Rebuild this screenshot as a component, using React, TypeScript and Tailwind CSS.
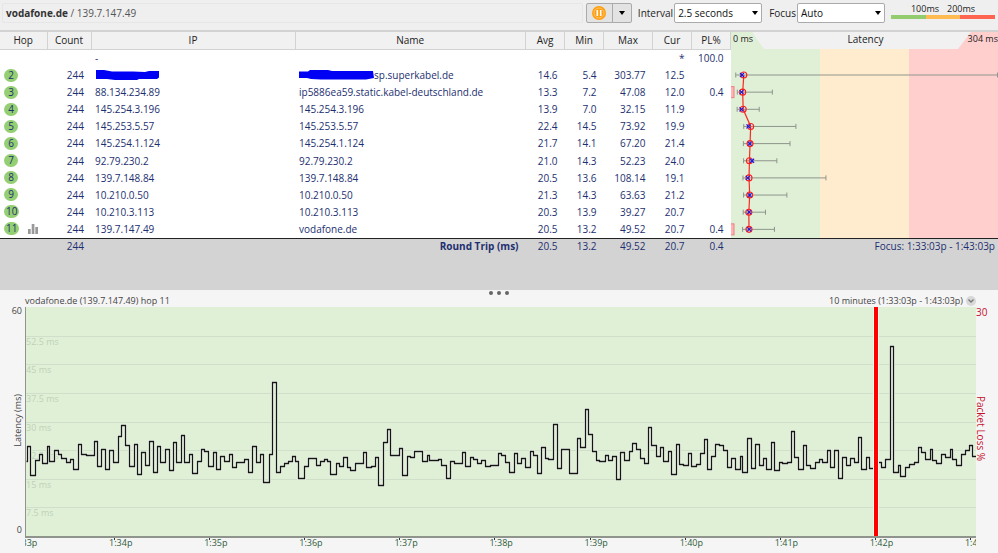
import React from "react";

type Hop = {
    hop?: number;
    ip: string;
    name: string;
    avg?: number;
    min?: number;
    max?: number;
    cur?: number;
    loss?: string;
};

const hops: Hop[] = [
    { hop: 2, ip: "", name: "sp.superkabel.de", avg: 14.6, min: 5.4, max: 303.77, cur: 12.5 },
    { hop: 3, ip: "88.134.234.89", name: "ip5886ea59.static.kabel-deutschland.de", avg: 13.3, min: 7.2, max: 47.08, cur: 12.0, loss: "0.4" },
    { hop: 4, ip: "145.254.3.196", name: "145.254.3.196", avg: 13.9, min: 7.0, max: 32.15, cur: 11.9 },
    { hop: 5, ip: "145.253.5.57", name: "145.253.5.57", avg: 22.4, min: 14.5, max: 73.92, cur: 19.9 },
    { hop: 6, ip: "145.254.1.124", name: "145.254.1.124", avg: 21.7, min: 14.1, max: 67.2, cur: 21.4 },
    { hop: 7, ip: "92.79.230.2", name: "92.79.230.2", avg: 21.0, min: 14.3, max: 52.23, cur: 24.0 },
    { hop: 8, ip: "139.7.148.84", name: "139.7.148.84", avg: 20.5, min: 13.6, max: 108.14, cur: 19.1 },
    { hop: 9, ip: "10.210.0.50", name: "10.210.0.50", avg: 21.3, min: 14.3, max: 63.63, cur: 21.2 },
    { hop: 10, ip: "10.210.3.113", name: "10.210.3.113", avg: 20.3, min: 13.9, max: 39.27, cur: 20.7 },
    { hop: 11, ip: "139.7.147.49", name: "vodafone.de", avg: 20.5, min: 13.2, max: 49.52, cur: 20.7, loss: "0.4" },
];

const columns = ["Hop", "Count", "IP", "Name", "Avg", "Min", "Max", "Cur", "PL%"];

const ticks = ["1:33p", "1:34p", "1:35p", "1:36p", "1:37p", "1:38p", "1:39p", "1:40p", "1:41p", "1:42p", "1:43p"];

const gridLabels = ["", "52.5 ms", "45 ms", "37.5 ms", "30 ms", "22.5 ms", "15 ms", "7.5 ms"];

// latency trace, x/y steps on a 950x229 plot
const trace =
    "M0 154H1V139H4V168H9V153H13V147H16V156H21V139H23V154H28V143H32V147H35V151H40V155H44V152H47V162H52V137H55V147H60V148H68V134H71V159H75V142H79V162H83V143H87V155H92V129H95V118H99V138H103V159H108V137H111V167H115V145H119V158H123V134H127V165H131V139H134V155H139V142H143V163H147V135H150V155H155V128H158V155H163V147H166V166H171V154H175V142H178V144H182V159H187V145H190V162H194V149H198V154H203V147H206V160H210V155H218V152H222V165H226V139H230V155H234V147H237V175H243V147H246V75H250V165H254V159H258V156H262V154H266V149H269V154H272V171H278V159H282V151H290" +
    "V158H294V154H298V152H301V154H304V167H310V156H313V159H317V150H321V160H324V163H329V156H337V145H340V160H345V159H349V150H352V178H357V135H361V122H364V148H373V141H376V168H381V149H384V150H388V144H396V154H401V148H403V153H412V152H415V158H420V171H424V154H428V156H436V145H439V159H444V150H447V152H451V156H455V153H459V159H464V158H472" +
    "V146H475V148H479V155H483V165H488V146H491V156H495V151H499V160H504V144H507V148H511V166H515V140H519V151H522V152H527V117H531V161H535V142H543V166H551V131H554V140H559V102H562V127H566V144H570V153H573V154H579V148H582V153H586V149H590V172H594V145H598V153H603V144H606V136H610V142H614V151H618V156H622V120H625V138H630V149H634V140H637V154H642V144H645V167H650V137H653V157H657V158H662V146H665V159H670V157H674" +
    "V146H678V132H681V162H685V149H689V137H693V138H697V143H701V160H705V151H709V162H714V149H716V165H721V131H725V161H729V137H733V158H737V151H740V162H745V135H748V163H753V155H756V156H761V155H765V124H768V150H772V162H777V138H780V158H784V161H789V155H793V152H796V155H801V143H804V160H808V143H812V171H816V150H820V158H824V151H828V155H832V130H835V162H840V150H843V161H851" +
    "V155H855V160H859V152H864V39H867V165H872V158H874V169H879V160H883V157H888V155H892V140H895V145H899V152H904V142H906V153H910V156H915V147H919V150H924V142H926V152H930V158H935V147H939V143H943V138H946V149H950";

const SCALE = 0.878;

function Caret() {
    return (
        <svg className="h-1 w-1.5 fill-black" viewBox="0 0 6 4" aria-hidden="true">
            <path d="M0 0H6L3 4Z" />
        </svg>
    );
}

function Dropdown({ id, label, value }: { id: string; label: string; value: string }) {
    return (
        <div className="flex items-center gap-px">
            <label htmlFor={id} className="text-[#222]">{label}</label>
            <div className="relative">
                <select id={id} className="block h-5 w-[88px] appearance-none rounded-xs border border-[#aaa] bg-white px-[3px] text-[#111]">
                    <option>{value}</option>
                </select>
                <span className="pointer-events-none absolute top-2 right-1">
                    <Caret />
                </span>
            </div>
        </div>
    );
}

function Toolbar() {
    return (
        <header className="flex h-[30px] items-start justify-between gap-[3px] bg-[#efefef] pt-[3px] pr-[3px] pl-0.5">
            <div className="flex h-5 flex-1 items-center rounded-xs border border-[#e6e6e6] px-[3px] text-[#555]">
                <b className="text-[#333]">vodafone.de</b>
                <span className="whitespace-pre"> / 139.7.147.49</span>
            </div>
            <div className="flex h-5 w-[46px] rounded-xs border border-[#aaa] bg-[#e3e3e3]">
                <button aria-label="Pause" className="grid w-[26px] place-items-center border-r border-[#aaa]">
                    <svg className="size-3.5" viewBox="0 0 14 14">
                        <circle cx="7" cy="7" r="7" fill="#ff9f0f" />
                        <circle cx="7" cy="7" r="5" fill="none" stroke="#ffc468" />
                        <path d="M5.3 4V10M8.7 4V10" stroke="#fff" strokeWidth="1.6" />
                    </svg>
                </button>
                <button aria-label="More" className="grid flex-1 place-items-center">
                    <Caret />
                </button>
            </div>
            <div className="flex gap-[7px] pl-[3px]">
                <Dropdown id="interval" label="Interval" value="2.5 seconds" />
                <Dropdown id="focus" label="Focus" value="Auto" />
            </div>
            <div className="ml-[3px] w-[104px] text-[9px] leading-[12px] text-[#222]">
                <div className="flex justify-center gap-2">
                    <span>100ms</span>
                    <span>200ms</span>
                </div>
                <div className="flex h-1">
                    <i className="flex-1 bg-[#93cc6f]" />
                    <i className="flex-1 bg-[#fdbb51]" />
                    <i className="flex-1 bg-[#fe6450]" />
                </div>
            </div>
        </header>
    );
}

function Scribble({ wide }: { wide?: boolean }) {
    return wide ? (
        <svg className="h-2.5 w-[75px] shrink-0" viewBox="0 0 75 10" aria-hidden="true">
            <path d="M0 1.5H9L11 0H29L33 1H74L75 8L67 9.5H22L12 9L8 8H0Z" fill="#0000f5" />
        </svg>
    ) : (
        <svg className="h-2.5 w-16" viewBox="0 0 64 10" aria-hidden="true">
            <path d="M1 0L9 0L17 1.5H38L50 2L54 1H64V7.5L62 9H44L42 10H20L12 9H1Z" fill="#0000f5" />
        </svg>
    );
}

function HopTable() {
    return (
        <table className="h-[221px] w-full table-fixed border-collapse text-right whitespace-nowrap text-[#1d2f70]">
            <colgroup>
                <col className="w-[47px]" />
                <col className="w-[44px]" />
                <col className="w-[204px]" />
                <col />
                <col className="w-[39px]" />
                <col className="w-[39px]" />
                <col className="w-[49px]" />
                <col className="w-[39px]" />
                <col className="w-[39px]" />
            </colgroup>
            <thead>
                <tr className="h-[17px] bg-[#f1f1f1] text-center text-[#222]">
                    {columns.map((c) => (
                        <th key={c} className="border-r border-b border-[#d2d2d2] p-0 font-normal">{c}</th>
                    ))}
                </tr>
            </thead>
            <tbody className="bg-white">
                <tr>
                    <td colSpan={2} />
                    <td className="p-0 pl-1 text-left">-</td>
                    <td colSpan={4} />
                    <td className="p-0 pr-[7px]">*</td>
                    <td className="p-0 pr-[7px]">100.0</td>
                </tr>
                {hops.map((h) => (
                    <tr key={h.hop}>
                        <td className="p-0 pl-1">
                            <div className="flex items-center gap-[9px]">
                                <span className="h-[13px] min-w-3.5 rounded-full bg-[#95cf73] px-0.5 text-center leading-[13px]">{h.hop}</span>
                                {h.hop === 11 && (
                                    <svg className="h-2.5 w-2.5 fill-[#999]" viewBox="0 0 10 10" aria-hidden="true">
                                        <path d="M0 5h2.7v5H0zM3.7 0h2.7v10H3.7zM7.3 3h2.7v7H7.3z" />
                                    </svg>
                                )}
                            </div>
                        </td>
                        <td className="p-0 pr-[7px]">244</td>
                        <td className="p-0 pl-1 text-left">{h.ip || <Scribble />}</td>
                        <td className="p-0 pl-1 text-left">
                            <div className="flex items-center">
                                {!h.ip && <Scribble wide />}
                                {h.name}
                            </div>
                        </td>
                        <td className="p-0 pr-[7px]">{h.avg!.toFixed(1)}</td>
                        <td className="p-0 pr-[7px]">{h.min!.toFixed(1)}</td>
                        <td className="p-0 pr-[7px]">{h.max!.toFixed(2)}</td>
                        <td className="p-0 pr-[7px]">{h.cur!.toFixed(1)}</td>
                        <td className="p-0 pr-[7px]">{h.loss}</td>
                    </tr>
                ))}
            </tbody>
            <tfoot>
                <tr className="h-[15px] border-t border-[#222]">
                    <td className="p-0" />
                    <td className="p-0 pr-[7px]">244</td>
                    <td className="p-0" />
                    <td className="p-0 pr-[7px] font-bold">Round Trip (ms)</td>
                    <td className="p-0 pr-[7px]">20.5</td>
                    <td className="p-0 pr-[7px]">13.2</td>
                    <td className="p-0 pr-[7px]">49.52</td>
                    <td className="p-0 pr-[7px]">20.7</td>
                    <td className="p-0 pr-[7px]">0.4</td>
                </tr>
            </tfoot>
        </table>
    );
}

function LatencyGraph() {
    const rowY = (i: number) => 26 + i * 17.15;
    const line = hops.map((h, i) => `${h.avg! * SCALE},${rowY(i)}`).join(" ");

    return (
        <div className="flex flex-col">
            <div className="relative h-[17px]">
                <svg className="absolute h-full w-full" viewBox="0 0 267 17" preserveAspectRatio="none" aria-hidden="true">
                    <path d="M0 0H89V17H0Z" fill="#dff0d7" />
                    <path d="M178 0H267V17H178Z" fill="#ffcfce" />
                    <path d="M21 0H240L227 17H33Z" fill="#f1f1f1" />
                </svg>
                <div className="relative grid grid-cols-[1fr_auto_1fr] items-center pl-0.5 text-[#222]">
                    <span className="text-[9px]">0 ms</span>
                    <span>Latency</span>
                    <span className="text-right text-[9px]">304 ms</span>
                </div>
            </div>
            <svg className="h-[189px] w-full" viewBox="0 0 267 189" preserveAspectRatio="none">
                <path d="M0 0H89V189H0Z" fill="#dff0d7" />
                <path d="M89 0H178V189H89Z" fill="#ffebcd" />
                <path d="M178 0H267V189H178Z" fill="#ffcfce" />
                {hops.map((h, i) => {
                    const y = rowY(i);
                    const a = h.min! * SCALE;
                    const b = Math.min(h.max! * SCALE, 266.5);
                    return (
                        <g key={h.hop}>
                            {h.loss && <rect x="-0.5" y={y - 5.5} width="3.5" height="11" fill="#ffb3b8" stroke="#ee8080" />}
                            <path d={`M${a} ${y}H${b}M${a} ${y - 2.5}v5M${b} ${y - 2.5}v5`} stroke="#8f958c" fill="none" />
                        </g>
                    );
                })}
                <polyline points={line} fill="none" stroke="#fb2a20" strokeWidth="1.2" />
                {hops.map((h, i) => {
                    const x = h.cur! * SCALE;
                    return (
                        <g key={h.hop} fill="none">
                            <circle cx={h.avg! * SCALE} cy={rowY(i)} r="3" stroke="#fb2020" strokeWidth="1.1" />
                            <path d={`M${x - 2} ${rowY(i) - 2}l4 4m0 -4l-4 4`} stroke="#1414e6" strokeWidth="1.1" />
                        </g>
                    );
                })}
            </svg>
            <div className="border-t border-[#222] pr-[3px] text-right text-[#1d2f70]">Focus: 1:33:03p - 1:43:03p</div>
        </div>
    );
}

function Timeline() {
    return (
        <section className="grid flex-1 grid-cols-[25px_1fr_22px] grid-rows-[12px_1fr_15px] bg-[#f5f5f5] text-[9px] leading-[12px] text-[#444]">
            <div className="col-start-2 flex justify-between">
                <span>vodafone.de (139.7.147.49) hop 11</span>
                <span className="flex items-center gap-[3px]">
                    10 minutes (1:33:03p - 1:43:03p)
                    <button aria-label="Change time range" className="grid size-2.5 place-items-center rounded-full bg-[#d8d8d8]">
                        <svg className="h-1 w-1.5" viewBox="0 0 6 4" fill="none" stroke="#777" strokeWidth="1.3">
                            <path d="M0.5 0.5L3 3L5.5 0.5" />
                        </svg>
                    </button>
                </span>
            </div>

            <div className="col-start-1 row-start-2 flex flex-col items-end justify-between pr-px pb-1">
                <span className="pr-0.5 leading-[8px]">60</span>
                <span className="rotate-180 [writing-mode:vertical-rl]">Latency (ms)</span>
                <span className="pr-0.5 leading-[8px]">0</span>
            </div>

            <div className="relative col-start-2 row-start-2 border-b-2 border-l border-[#8f948d] bg-[#dff0d7]">
                <div className="absolute inset-0 grid grid-rows-8 leading-[10px] text-[#bfd0b8]">
                    {gridLabels.map((l, i) => (
                        <div key={i} className={i ? "border-t border-[#cfdfc9]" : ""}>{l}</div>
                    ))}
                </div>
                <svg className="absolute h-full w-full" viewBox="0 0 950 229" preserveAspectRatio="none" fill="none">
                    <g transform="translate(0.5 0.5)">
                        <path d={trace} stroke="#eff8eb" strokeWidth="3" />
                        <path d={trace} stroke="#151515" strokeWidth="1.3" />
                    </g>
                    <path d="M847 0h6v229h-6z" fill="#f3faf0" />
                    <path d="M848 0h4v229h-4z" fill="#f00" />
                </svg>
            </div>

            <div className="col-start-3 row-start-2 grid grid-rows-[12px_1fr] text-[10px] leading-[10px] text-[#c4122b]">
                <span>30</span>
                <span className="self-center justify-self-start [writing-mode:vertical-rl]">Packet Loss %</span>
            </div>

            <div className="col-start-2 row-start-3 flex overflow-hidden leading-[12px] text-[#2e5c3a]">
                {ticks.map((t) => (
                    <div key={t} className="w-1/10 shrink-0 first:-ml-[11px]">
                        <div className="ml-[5px] h-0.5 w-px bg-[#333]" />
                        <div className="-mt-[3px]">{t}</div>
                    </div>
                ))}
            </div>
        </section>
    );
}

export default function App() {
    return (
        <div className="flex min-h-screen flex-col bg-[#efefef] font-['Open_Sans','Noto_Sans',sans-serif] text-[10px] leading-[14px]">
            <Toolbar />
            <main className="grid grid-cols-[731fr_267fr] border-t-2 border-[#d2d2d2] bg-[#d3d3d3] pb-[37px]">
                <HopTable />
                <LatencyGraph />
            </main>
            <div className="flex h-[5px] items-center justify-center gap-1 bg-[#f5f5f5]">
                <i className="size-1 rounded-full bg-[#666]" />
                <i className="size-1 rounded-full bg-[#666]" />
                <i className="size-1 rounded-full bg-[#666]" />
            </div>
            <Timeline />
        </div>
    );
}
